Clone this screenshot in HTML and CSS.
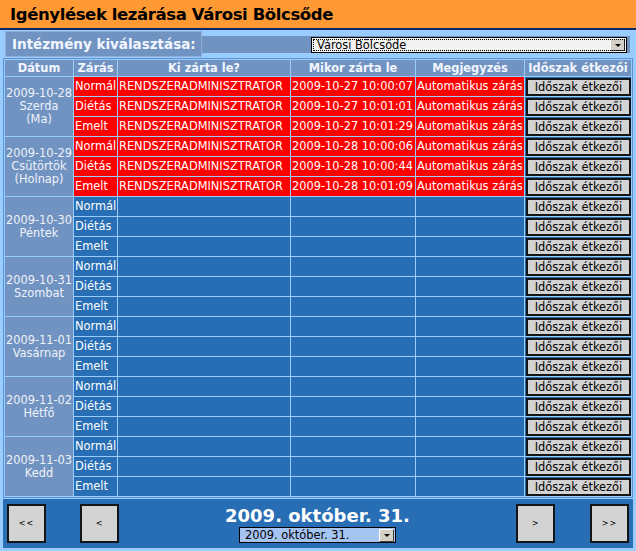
FILE: index.html
```html
<!DOCTYPE html>
<html lang="hu">
<head>
<meta charset="utf-8">
<title>Igénylések lezárása</title>
<link rel="stylesheet" href="styles.css">
</head>
<body>
<div class="title">Igénylések lezárása Városi Bölcsőde</div>
<div class="inst">
  <div class="inst-label">Intézmény kiválasztása:</div>
  <div class="inst-band">
    <div class="select select-top"><span class="sel-text">Városi Bölcsőde</span><span class="sel-btn"><span class="tri"></span></span></div>
  </div>
</div>
<table class="grid">
  <colgroup>
    <col class="c-date"><col class="c-type"><col class="c-who"><col class="c-when"><col class="c-note"><col class="c-act">
  </colgroup>
  <thead>
    <tr><th>Dátum</th><th>Zárás</th><th>Ki zárta le?</th><th>Mikor zárta le</th><th>Megjegyzés</th><th>Időszak étkezői</th></tr>
  </thead>
  <tbody>
    <tr class="closed"><td class="day" rowspan="3">2009-10-28<br>Szerda<br>(Ma)</td><td>Normál</td><td>RENDSZERADMINISZTRATOR</td><td>2009-10-27 10:00:07</td><td>Automatikus zárás</td><td class="act"><button class="btn">Időszak étkezői</button></td></tr>
    <tr class="closed"><td>Diétás</td><td>RENDSZERADMINISZTRATOR</td><td>2009-10-27 10:01:01</td><td>Automatikus zárás</td><td class="act"><button class="btn">Időszak étkezői</button></td></tr>
    <tr class="closed"><td>Emelt</td><td>RENDSZERADMINISZTRATOR</td><td>2009-10-27 10:01:29</td><td>Automatikus zárás</td><td class="act"><button class="btn">Időszak étkezői</button></td></tr>

    <tr class="closed"><td class="day" rowspan="3">2009-10-29<br>Csütörtök<br>(Holnap)</td><td>Normál</td><td>RENDSZERADMINISZTRATOR</td><td>2009-10-28 10:00:06</td><td>Automatikus zárás</td><td class="act"><button class="btn">Időszak étkezői</button></td></tr>
    <tr class="closed"><td>Diétás</td><td>RENDSZERADMINISZTRATOR</td><td>2009-10-28 10:00:44</td><td>Automatikus zárás</td><td class="act"><button class="btn">Időszak étkezői</button></td></tr>
    <tr class="closed"><td>Emelt</td><td>RENDSZERADMINISZTRATOR</td><td>2009-10-28 10:01:09</td><td>Automatikus zárás</td><td class="act"><button class="btn">Időszak étkezői</button></td></tr>

    <tr><td class="day" rowspan="3">2009-10-30<br>Péntek</td><td>Normál</td><td></td><td></td><td></td><td class="act"><button class="btn">Időszak étkezői</button></td></tr>
    <tr><td>Diétás</td><td></td><td></td><td></td><td class="act"><button class="btn">Időszak étkezői</button></td></tr>
    <tr><td>Emelt</td><td></td><td></td><td></td><td class="act"><button class="btn">Időszak étkezői</button></td></tr>

    <tr><td class="day" rowspan="3">2009-10-31<br>Szombat</td><td>Normál</td><td></td><td></td><td></td><td class="act"><button class="btn">Időszak étkezői</button></td></tr>
    <tr><td>Diétás</td><td></td><td></td><td></td><td class="act"><button class="btn">Időszak étkezői</button></td></tr>
    <tr><td>Emelt</td><td></td><td></td><td></td><td class="act"><button class="btn">Időszak étkezői</button></td></tr>

    <tr><td class="day" rowspan="3">2009-11-01<br>Vasárnap</td><td>Normál</td><td></td><td></td><td></td><td class="act"><button class="btn">Időszak étkezői</button></td></tr>
    <tr><td>Diétás</td><td></td><td></td><td></td><td class="act"><button class="btn">Időszak étkezői</button></td></tr>
    <tr><td>Emelt</td><td></td><td></td><td></td><td class="act"><button class="btn">Időszak étkezői</button></td></tr>

    <tr><td class="day" rowspan="3">2009-11-02<br>Hétfő</td><td>Normál</td><td></td><td></td><td></td><td class="act"><button class="btn">Időszak étkezői</button></td></tr>
    <tr><td>Diétás</td><td></td><td></td><td></td><td class="act"><button class="btn">Időszak étkezői</button></td></tr>
    <tr><td>Emelt</td><td></td><td></td><td></td><td class="act"><button class="btn">Időszak étkezői</button></td></tr>

    <tr><td class="day" rowspan="3">2009-11-03<br>Kedd</td><td>Normál</td><td></td><td></td><td></td><td class="act"><button class="btn">Időszak étkezői</button></td></tr>
    <tr><td>Diétás</td><td></td><td></td><td></td><td class="act"><button class="btn">Időszak étkezői</button></td></tr>
    <tr><td>Emelt</td><td></td><td></td><td></td><td class="act"><button class="btn">Időszak étkezői</button></td></tr>
  </tbody>
</table>
<div class="nav">
  <button class="nbtn">&lt;&lt;</button>
  <button class="nbtn nbtn-gap">&lt;</button>
  <div class="nav-center">
    <div class="nav-date">2009. október. 31.</div>
    <div class="select select-date"><span class="sel-text">2009. október. 31.</span><span class="sel-btn"><span class="tri"></span></span></div>
  </div>
  <button class="nbtn">&gt;</button>
  <button class="nbtn nbtn-gap2">&gt;&gt;</button>
</div>
</body>
</html>
```

FILE: styles.css
```css
* { box-sizing: border-box; }
html, body { margin: 0; padding: 0; }
body {
  width: 636px;
  height: 551px;
  overflow: hidden;
  background: #99CCFF;
  font-family: Verdana, "DejaVu Sans", sans-serif;
  font-size: 11.4px;
  color: #000;
}

.title {
  height: 30px;
  background: #FF9933;
  border-bottom: 2px solid #0B2766;
  padding-left: 10px;
  font-weight: bold;
  font-size: 16.5px;
  letter-spacing: -0.4px;
  line-height: 29px;
  white-space: nowrap;
}

.inst {
  display: flex;
  align-items: center;
  height: 28px;
  padding: 0 6px 0 5px;
}
.inst-label {
  width: 197px;
  height: 26px;
  background: #7193C1;
  border: 1px solid #8EAEDA;
  color: #F2F6FF;
  font-weight: bold;
  font-size: 13.5px;
  line-height: 24px;
  padding-left: 6px;
  white-space: nowrap;
}
.inst-band {
  flex: 1;
  height: 17px;
  background: #7193C1;
  display: flex;
  justify-content: flex-end;
  align-items: flex-start;
  padding: 1px 3px 0 0;
}

.select {
  display: flex;
  align-items: center;
  height: 16px;
  border: 1px solid #000;
  color: #000;
}
.select-top {
  width: 316px;
  background: #F2F2F2;
  outline: 1px dotted #000;
  outline-offset: -3px;
}
.select-date {
  width: 157px;
  background: #A6C4F2;
  margin-top: 1px;
}
.sel-text {
  flex: 1;
  padding-left: 5px;
  line-height: 14px;
  white-space: nowrap;
}
.sel-btn {
  width: 15px;
  height: 13px;
  margin-right: 1px;
  background: #D4D0C8;
  border-top: 1px solid #FFFFFF;
  border-left: 1px solid #FFFFFF;
  border-right: 1px solid #404040;
  border-bottom: 1px solid #404040;
  display: flex;
  align-items: center;
  justify-content: center;
}
.tri {
  width: 0;
  height: 0;
  border-left: 3px solid transparent;
  border-right: 3px solid transparent;
  border-top: 3px solid #000;
  margin-top: 1px;
}

.grid {
  border-collapse: separate;
  border-spacing: 1px;
  background: #99CCFF;
  border: 1px solid #5E93D3;
  margin-left: 3px;
  table-layout: fixed;
  width: 630px;
}
.c-date { width: 68px; }
.c-type { width: 43px; }
.c-who { width: 172px; }
.c-when { width: 124px; }
.c-note { width: 108px; }
.c-act { width: 106px; }

.grid th {
  height: 16px;
  padding: 0;
  background: #7193C1;
  color: #F2F6FF;
  font-weight: bold;
  text-align: center;
  line-height: 16px;
  white-space: nowrap;
  overflow: hidden;
}
.grid td {
  height: 19px;
  padding: 0 0 0 1px;
  background: #286EB4;
  color: #FFFFFF;
  line-height: 19px;
  white-space: nowrap;
  overflow: hidden;
}
.grid tr.closed td { background: #FF0000; }
.grid td.day, .grid tr.closed td.day {
  background: #7193C1;
  color: #EEF2FA;
  text-align: center;
  line-height: 13px;
  padding: 0;
}
.grid td.act, .grid tr.closed td.act {
  background: #286EB4;
  padding: 0;
  vertical-align: top;
}

.btn {
  display: block;
  width: 105px;
  height: 18px;
  margin: 1px 0 0 1px;
  padding: 0;
  background: #D3D3D3;
  border: 2px solid #151515;
  font-family: Verdana, "DejaVu Sans", sans-serif;
  font-size: 11.4px;
  line-height: 14px;
  color: #000;
  text-align: center;
  white-space: nowrap;
}

.nav {
  display: flex;
  align-items: flex-start;
  height: 49px;
  margin: 1px 3px 0 3px;
  padding: 5px 4px 0 4px;
  background: #286EB4;
}
.nbtn {
  width: 39px;
  height: 39px;
  padding: 0;
  background: #D3D3D3;
  border: 2px solid #151515;
  font-family: Verdana, "DejaVu Sans", sans-serif;
  font-size: 8px;
  letter-spacing: 1px;
  color: #000;
}
.nbtn-gap { margin-left: 34px; }
.nbtn-gap2 { margin-left: 35px; }
.nav-center {
  flex: 1;
  display: flex;
  flex-direction: column;
  align-items: center;
  padding-top: 2px;
}
.nav-date {
  color: #FFFFFF;
  font-weight: bold;
  font-size: 18px;
  line-height: 20px;
  white-space: nowrap;
}
```
